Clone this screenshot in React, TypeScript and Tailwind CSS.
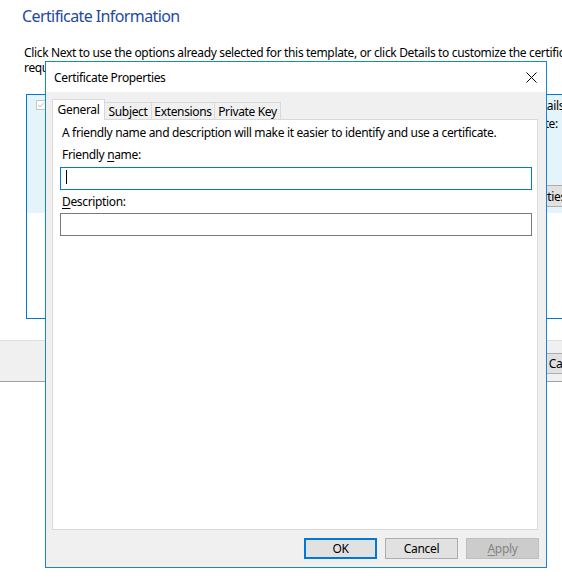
import React from 'react';

// Background wizard page (partly covered by the dialog)
function WizardPage() {
  return (
    <div className="w-[562px] h-[579px] bg-white">
      <div className="pt-[6px] pl-[22px] text-[16px] leading-[20px] tracking-[-0.6px] text-[#1e4aa0] whitespace-nowrap">
        Certificate Information
      </div>
      <p className="mt-[19px] pl-[24px] text-[12px] leading-[15px] text-black whitespace-nowrap">
        Click Next to use the options already selected for this template, or click Details to customize the certificate
        <br />
        request, and then click Next.
      </p>

      {/* template list */}
      <div className="mt-[19px] ml-[26px] w-[620px] h-[225px] border border-[#0078d7] bg-white">
        <div className="flex h-[118px] bg-[#e5f3fb]">
          <div className="w-[501px] pl-[9px] pt-[5px]">
            <div className="w-[10px] h-[10px] border border-[#c4c4c4] bg-white flex items-center justify-center">
              <svg width="8" height="8" viewBox="0 0 8 8">
                <path d="M1 4 L3 6 L7 1.5" stroke="#bdbdbd" strokeWidth="1" fill="none" />
              </svg>
            </div>
          </div>
          <div className="flex flex-col text-[12px] leading-[15px] text-black">
            <span className="mt-[3px] whitespace-nowrap">Details</span>
            <span className="mt-[3px] whitespace-nowrap">State:</span>
            <button className="mt-[54px] h-[22px] px-[12px] bg-[#e1e1e1] border border-[#adadad] text-[12px] whitespace-nowrap -ml-[30px]">
              Properties
            </button>
          </div>
        </div>
      </div>

      {/* button bar */}
      <div className="mt-[21px] h-[42px] bg-[#f0f0f0] border-t border-[#dfdfdf] border-b border-b-[#a0a0a0] pt-[9px] pl-[529px]">
        <button className="w-[75px] h-[21px] bg-[#e1e1e1] border border-[#adadad] text-[12px] leading-[15px] text-black">
          Cancel
        </button>
      </div>
    </div>
  );
}

function CertificateProperties() {
  const tabs = [
    { label: 'Subject', w: 'w-[47px]' },
    { label: 'Extensions', w: 'w-[63px]' },
    { label: 'Private Key', w: 'w-[66px]' },
  ];
  return (
    <div className="absolute left-[45px] top-[61px] w-[502px] h-[507px] border border-[#1883d7] bg-[#f0f0f0] flex flex-col text-[12px] leading-[15px] text-black">
      {/* title bar */}
      <div className="h-[30px] bg-white flex items-center justify-between pl-[8px] pr-[9px]">
        <span>Certificate Properties</span>
        <svg width="11" height="11" viewBox="0 0 11 11">
          <path d="M0.5 0.5 L10.5 10.5 M10.5 0.5 L0.5 10.5" stroke="#000" strokeWidth="1" />
        </svg>
      </div>

      <div className="flex-1 flex flex-col pt-[7px] pl-[6px] pr-[8px]">
        {/* tabs */}
        <div className="h-[20px] flex items-end relative z-10">
          <div className="w-[53px] h-[21px] -mb-px bg-white border-x border-t border-[#d9d9d9] flex justify-center pt-[2px]">
            General
          </div>
          {tabs.map((t) => (
            <div
              key={t.label}
              className={`${t.w} h-[17px] border-t border-r border-[#d9d9d9] flex justify-center items-start pt-[1px]`}
            >
              {t.label}
            </div>
          ))}
        </div>

        {/* tab panel */}
        <div className="h-[411px] bg-white border border-[#d9d9d9] pt-[5px] pl-[7px]">
          <p className="ml-[2px] whitespace-nowrap">
            A friendly name and description will make it easier to identify and use a certificate.
          </p>
          <p className="ml-[2px] mt-[7px]">
            Friendly <span className="underline underline-offset-2">n</span>ame:
          </p>
          <div className="mt-[5px] w-[472px] h-[23px] border border-[#0078d7] bg-white pt-[2px] pl-[5px]">
            <div className="w-px h-[14px] bg-black" />
          </div>
          <p className="ml-[2px] mt-[4px]">
            <span className="underline underline-offset-2">D</span>escription:
          </p>
          <div className="mt-[4px] w-[472px] h-[23px] border border-[#7a7a7a] bg-white" />
        </div>

        {/* buttons */}
        <div className="mt-[8px] flex justify-end gap-[8px] -mr-[1px]">
          <button className="w-[73px] h-[21px] bg-[#e1e1e1] border-2 border-[#0078d7] text-black">OK</button>
          <button className="w-[73px] h-[21px] bg-[#e1e1e1] border border-[#adadad] text-black">Cancel</button>
          <button className="w-[73px] h-[21px] bg-[#cccccc] border border-[#bfbfbf] text-[#838383]">
            <span className="underline underline-offset-2">A</span>pply
          </button>
        </div>
      </div>
    </div>
  );
}

export default function App() {
  return (
    <div className="relative w-[562px] h-[579px] overflow-hidden bg-white font-['Noto_Sans',sans-serif] tracking-[-0.34px]">
      <WizardPage />
      <CertificateProperties />
    </div>
  );
}
